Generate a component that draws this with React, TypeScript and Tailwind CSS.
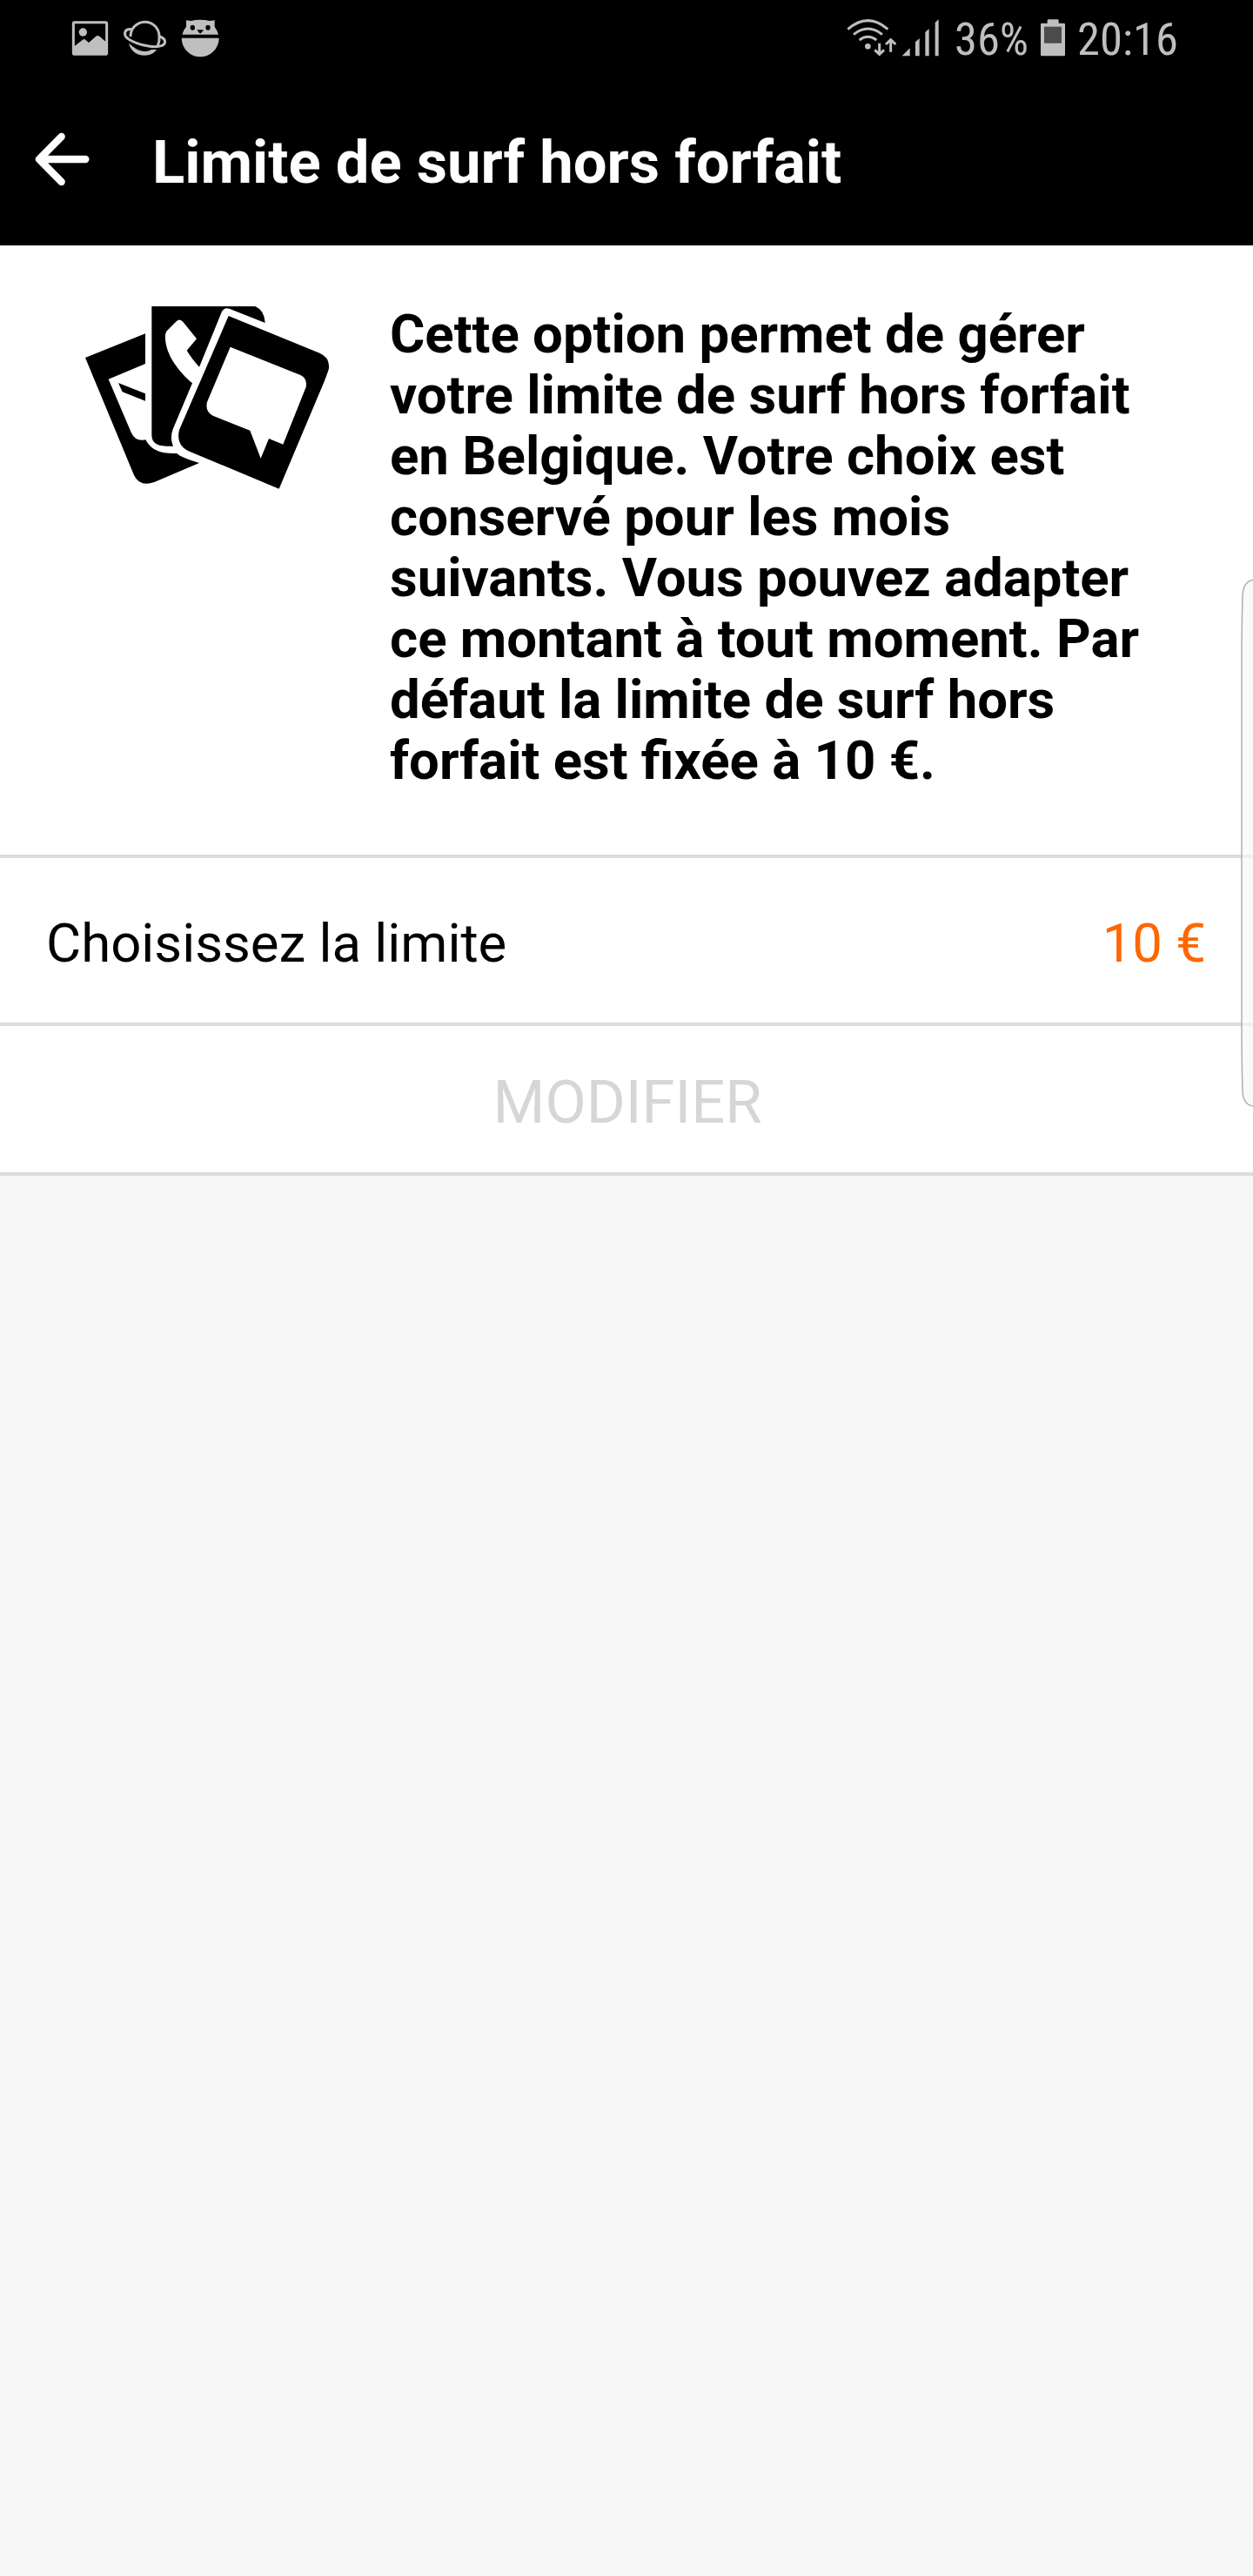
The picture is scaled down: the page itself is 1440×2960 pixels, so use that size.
const INFO_LINES = [
    'Cette option permet de gérer',
    'votre limite de surf hors forfait',
    'en Belgique. Votre choix est',
    'conservé pour les mois',
    'suivants. Vous pouvez adapter',
    'ce montant à tout moment. Par',
    'défaut la limite de surf hors',
    'forfait est fixée à 10 €.',
];

function StatusBar() {
    return (
        <div className="h-[84px] bg-black flex items-center justify-between pt-[7px] pl-[82px] pr-[86px] text-[#bfbfbf]">
            {/* Notifications */}
            <div className="flex items-center">
                <svg className="w-[43px] h-[48px]" viewBox="36 34 129 144" fill="none">
                    <rect x="43" y="45" width="115" height="110" rx="4" stroke="#bfbfbf" strokeWidth="9" />
                    <circle cx="76" cy="79" r="14" fill="#bfbfbf" />
                    <path d="M43 130 L75 105 Q80 101 85 105 L96 115 L120 94 Q127 88 134 94 L158 115 V156 H43 Z" fill="#bfbfbf" />
                </svg>
                <svg className="ml-[16px] w-[52px] h-[48px]" viewBox="213 34 156 144" fill="none" stroke="#bfbfbf" strokeWidth="9">
                    <path d="M240 94 A49 49 0 0 1 339 92 Q341 110 334 126" />
                    <path d="M244 69 C216 67 212 92 238 106 C264 121 310 132 336 128 C366 124 365 103 341 94" />
                    <path d="M234 117 C246 168 312 169 330 139 L312 139 C296 149 268 149 234 117 Z" fill="#bfbfbf" stroke="none" />
                </svg>
                <svg className="ml-[15px] w-[44px] h-[48px]" viewBox="412 34 132 144" fill="#bfbfbf">
                    <path d="M430 38 L446 40 Q478 32 511 40 L528 38 L528 60 Q537 72 541 87 H416 Q420 72 430 60 Z" />
                    <path d="M414 99 H543 A64.5 65 0 0 1 414 99 Z" />
                    <ellipse cx="452" cy="63" rx="8" ry="9" fill="#000" />
                    <ellipse cx="505" cy="63" rx="8" ry="9" fill="#000" />
                    <path d="M467 71 H490 L482 81 Q478 84 475 81 Z" fill="#000" />
                </svg>
            </div>

            {/* System */}
            <div className="flex items-center">
                <svg className="w-[107px] h-[48px]" viewBox="40 34 321 144" fill="none" stroke="#bfbfbf" strokeWidth="9">
                    <path d="M44 69 Q113 9 182 69" />
                    <path d="M64 87 Q113 47 163 87" />
                    <path d="M84 106 Q113 84 143 106" />
                    <circle cx="113" cy="128" r="10" fill="#bfbfbf" stroke="none" />
                    <path d="M153 117 V154 M137 140 L153 155 L169 140" />
                    <path d="M192 147 V106 M175 121 L192 105 L209 121" />
                    <path d="M231 161 L258 134 V161 Z M277 113 L291 100 V161 H277 Z M311 79 L324 67 V161 H311 Z M345 46 L357 35 V161 H345 Z" fill="#bfbfbf" stroke="none" />
                </svg>
                <span className="ml-[17px] mb-[2px] w-[84px] text-[52.5px] leading-[48px] [font-stretch:condensed]">36%</span>
                <svg className="ml-[15px] w-[28px] h-[48px]" viewBox="708 34 84 144" fill="#bfbfbf">
                    <path d="M731 48 V39 Q731 35 735 35 H766 Q770 35 770 39 V48 H788 Q792 48 792 52 V157 Q792 161 788 161 H712 Q708 161 708 157 V52 Q708 48 712 48 Z" />
                    <rect x="720" y="60" width="60" height="57" fill="#4c4c4c" />
                </svg>
                <span className="ml-[14px] mb-[2px] w-[116px] text-[52.5px] leading-[48px] [font-stretch:condensed]">20:16</span>
            </div>
        </div>
    );
}

function CardsIcon() {
    return (
        <svg className="mt-[3px] w-[280px] h-[210px] shrink-0" viewBox="54 66 840 630">
            <path d="M54 243 L261 160 V264 L134 317 L212 500 Q226 533 262 526 C280 560 310 575 370 573 Q380 585 447 606 L292 672 Q242 690 222 648 Z" />
            <path d="M168 330 L261 367 V392 L182 361 Z" />
            <path d="M283 66 H640 Q672 80 674 123 L551 74 Q532 68 524 86 L447 275 Q420 245 404 218 L438 178 L392 121 Q380 106 368 118 L336 150 Q328 158 330 180 C334 235 375 290 423 331 L356 490 Q345 520 357 548 H335 Q283 548 283 510 Z" />
            <path d="M548 99 L862 227 Q900 244 893 284 L880 320 L722 695 L408 564 Q366 542 378 492 Z" />
            <path d="M554 206 L796 303 Q820 314 815 344 L736 542 L687 522 L659 590 L622 494 L496 444 Q466 430 474 396 Z" fill="#fff" />
        </svg>
    );
}

export default function App() {
    return (
        <div className="h-[2960px] w-[1440px] overflow-hidden bg-[#f7f7f7] relative text-black font-['Roboto',sans-serif]">
            <StatusBar />

            {/* Header */}
            <header className="h-[198px] bg-black text-white flex items-start">
                <svg className="ml-[40px] mt-[67px] w-[64px] h-[64px]" viewBox="120 93 192 192" fill="none" stroke="#fff" strokeWidth="25" strokeLinecap="round" strokeLinejoin="round">
                    <path d="M212 111 L135 189 L212 267 M138 189 H295" />
                </svg>
                <h1 className="ml-[71px] mt-[62px] text-[68.8px] leading-[81px] font-bold whitespace-nowrap">Limite de surf hors forfait</h1>
            </header>

            {/* Description */}
            <section className="h-[704px] bg-white border-b-4 border-[#dcdcdc] flex items-start pl-[98px] pt-[67px]">
                <CardsIcon />
                <p className="ml-[70px] text-[61.7px] leading-[70px] font-bold whitespace-nowrap">
                    {INFO_LINES.map((line) => (
                        <span key={line} className="block">{line}</span>
                    ))}
                </p>
            </section>

            {/* Limit row */}
            <div className="h-[193px] bg-white border-b-4 border-[#dcdcdc] flex items-start justify-between pl-[53px] pr-[54px] pt-[62px] text-[61.7px] leading-[72px]">
                <span>Choisissez la limite</span>
                <span className="text-[#ff6600]">10 €</span>
            </div>
            <button className="w-full h-[172px] bg-white border-b-4 border-[#dcdcdc] flex items-start justify-center pt-[47px] pl-[2px] text-[68.7px] leading-[81px] text-[#d6d6d6]">
                MODIFIER
            </button>

            {/* Edge panel handle */}
            <svg className="absolute right-0 top-[664px] w-[15px] h-[609px]" viewBox="1425 664 15 609">
                <path d="M1442 666 Q1429 667 1428 684 Q1427 720 1427 760 V1176 Q1427 1220 1428 1254 Q1429 1271 1442 1271" fill="rgba(248,248,248,0.7)" stroke="#b0b0b0" strokeWidth="1.5" />
            </svg>
        </div>
    );
}
